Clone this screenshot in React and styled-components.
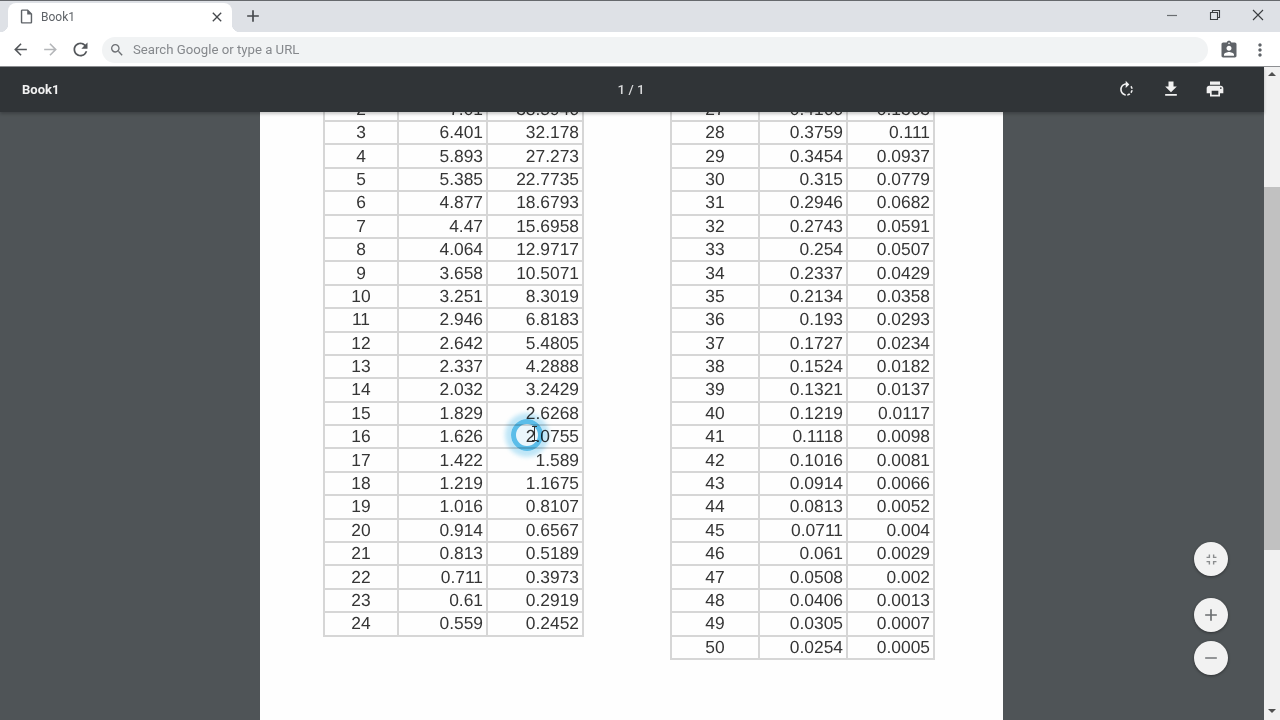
import React from "react";
import styled, { createGlobalStyle } from "styled-components";
import {
  MdArrowBack,
  MdArrowForward,
  MdRefresh,
  MdSearch,
  MdClose,
  MdAdd,
  MdRemove,
  MdFileDownload,
  MdPrint,
  MdMoreVert,
  MdAssignmentInd,
  MdRotateRight,
  MdFullscreenExit,
  MdOutlineInsertDriveFile,
} from "react-icons/md";

const leftRows = [
  ["2", "7.01", "38.5946"],
  ["3", "6.401", "32.178"],
  ["4", "5.893", "27.273"],
  ["5", "5.385", "22.7735"],
  ["6", "4.877", "18.6793"],
  ["7", "4.47", "15.6958"],
  ["8", "4.064", "12.9717"],
  ["9", "3.658", "10.5071"],
  ["10", "3.251", "8.3019"],
  ["11", "2.946", "6.8183"],
  ["12", "2.642", "5.4805"],
  ["13", "2.337", "4.2888"],
  ["14", "2.032", "3.2429"],
  ["15", "1.829", "2.6268"],
  ["16", "1.626", "2.0755"],
  ["17", "1.422", "1.589"],
  ["18", "1.219", "1.1675"],
  ["19", "1.016", "0.8107"],
  ["20", "0.914", "0.6567"],
  ["21", "0.813", "0.5189"],
  ["22", "0.711", "0.3973"],
  ["23", "0.61", "0.2919"],
  ["24", "0.559", "0.2452"],
];

const rightRows = [
  ["27", "0.4166", "0.1363"],
  ["28", "0.3759", "0.111"],
  ["29", "0.3454", "0.0937"],
  ["30", "0.315", "0.0779"],
  ["31", "0.2946", "0.0682"],
  ["32", "0.2743", "0.0591"],
  ["33", "0.254", "0.0507"],
  ["34", "0.2337", "0.0429"],
  ["35", "0.2134", "0.0358"],
  ["36", "0.193", "0.0293"],
  ["37", "0.1727", "0.0234"],
  ["38", "0.1524", "0.0182"],
  ["39", "0.1321", "0.0137"],
  ["40", "0.1219", "0.0117"],
  ["41", "0.1118", "0.0098"],
  ["42", "0.1016", "0.0081"],
  ["43", "0.0914", "0.0066"],
  ["44", "0.0813", "0.0052"],
  ["45", "0.0711", "0.004"],
  ["46", "0.061", "0.0029"],
  ["47", "0.0508", "0.002"],
  ["48", "0.0406", "0.0013"],
  ["49", "0.0305", "0.0007"],
  ["50", "0.0254", "0.0005"],
];

function GaugeTable({ rows, columns }) {
  return (
    <Table>
      {rows.map((row) => (
        <Row key={row[0]} $columns={columns}>
          <GaugeCell>{row[0]}</GaugeCell>
          <NumberCell>{row[1]}</NumberCell>
          <NumberCell>{row[2]}</NumberCell>
        </Row>
      ))}
    </Table>
  );
}

export default function App() {
  return (
    <>
      <GlobalStyle />
      <Window>
        <TabStrip>
          <Tab>
            <MdOutlineInsertDriveFile size={17} color="#5f6368" />
            <TabTitle>Book1</TabTitle>
            <MdClose size={16} color="#45484c" />
          </Tab>
          <NewTab>
            <MdAdd size={20} color="#45484c" />
          </NewTab>
          <WindowControls>
            <WindowButton>
              <svg width="12" height="12" viewBox="0 0 12 12">
                <path d="M1 6.5h10" stroke="#6a6d71" strokeWidth="1.2" />
              </svg>
            </WindowButton>
            <WindowButton>
              <svg width="12" height="12" viewBox="0 0 12 12" fill="none">
                <path d="M1.5 3.5h7v7h-7z M3.5 3.5v-2h7v7h-2" stroke="#3a3d40" strokeWidth="1.1" />
              </svg>
            </WindowButton>
            <WindowButton>
              <svg width="12" height="12" viewBox="0 0 12 12">
                <path d="M1 1l10 10M11 1L1 11" stroke="#3a3d40" strokeWidth="1.1" />
              </svg>
            </WindowButton>
          </WindowControls>
        </TabStrip>

        <Toolbar>
          <NavButton>
            <MdArrowBack size={19} color="#54575b" />
          </NavButton>
          <NavButton>
            <MdArrowForward size={19} color="#b4b6b9" />
          </NavButton>
          <NavButton>
            <MdRefresh size={21} color="#54575b" />
          </NavButton>
          <Omnibox>
            <MdSearch size={16} color="#6c6f73" />
            <OmniboxText>Search Google or type a URL</OmniboxText>
          </Omnibox>
          <ProfileButton>
            <MdAssignmentInd size={20} color="#5f6368" />
          </ProfileButton>
          <MenuButton>
            <MdMoreVert size={20} color="#5f6368" />
          </MenuButton>
        </Toolbar>

        <Main>
          <ViewerColumn>
            <PdfBar>
              <PdfTitle>Book1</PdfTitle>
              <PageCount>1 / 1</PageCount>
              <PdfActions>
                <MdRotateRight size={19} color="#f1f1f1" />
                <MdFileDownload size={20} color="#f1f1f1" />
                <MdPrint size={20} color="#f1f1f1" />
              </PdfActions>
            </PdfBar>
            <Canvas>
              <Page>
                <GaugeTable rows={leftRows} columns="74px 89px 96px" />
                <GaugeTable rows={rightRows} columns="88px 88px 87px" />
              </Page>
              <Ripple>
                <ICursor />
              </Ripple>
              <FabStack>
                <Fab>
                  <MdFullscreenExit size={17} color="#8a8c8e" />
                </Fab>
                <Fab $gap="22px">
                  <MdAdd size={20} color="#6b6e70" />
                </Fab>
                <Fab $gap="9px">
                  <MdRemove size={20} color="#808385" />
                </Fab>
              </FabStack>
            </Canvas>
          </ViewerColumn>
          <Scrollbar>
            <ArrowUp />
            <Thumb />
            <ArrowDown />
          </Scrollbar>
        </Main>
      </Window>
    </>
  );
}

const GlobalStyle = createGlobalStyle`
  html, body {
    margin: 0;
    padding: 0;
    width: 1280px;
    height: 720px;
    overflow: hidden;
  }
  * {
    box-sizing: border-box;
  }
`;

const Window = styled.div`
  width: 1280px;
  height: 720px;
  display: flex;
  flex-direction: column;
  font-family: Roboto, "Liberation Sans", sans-serif;
  filter: blur(0.4px);
`;

const TabStrip = styled.div`
  height: 32px;
  flex: none;
  display: flex;
  align-items: flex-end;
  padding: 0 1px 0 8px;
  background: #dee1e6;
  border-top: 1px solid #66696d;
`;

const Tab = styled.div`
  position: relative;
  width: 224px;
  height: 29px;
  display: flex;
  align-items: center;
  padding: 0 7px 2px 10px;
  background: #fff;
  border-radius: 8px 8px 0 0;

  &::before,
  &::after {
    content: "";
    position: absolute;
    bottom: 0;
    width: 8px;
    height: 8px;
  }
  &::before {
    left: -8px;
    background: radial-gradient(circle at 0 0, transparent 8px, #fff 8.5px);
  }
  &::after {
    right: -8px;
    background: radial-gradient(circle at 100% 0, transparent 8px, #fff 8.5px);
  }
`;

const TabTitle = styled.span`
  flex: 1;
  margin-left: 6px;
  font-size: 12px;
  color: #5f6368;
`;

const NewTab = styled.div`
  display: flex;
  align-items: center;
  margin: 0 0 6px 11px;
  height: 20px;
`;

const WindowControls = styled.div`
  margin-left: auto;
  align-self: flex-start;
  display: flex;
`;

const WindowButton = styled.div`
  width: 43px;
  height: 27px;
  display: flex;
  align-items: center;
  justify-content: center;
`;

const Toolbar = styled.div`
  height: 35px;
  flex: none;
  display: flex;
  align-items: center;
  padding: 1px 0 0 5px;
  background: #fff;
  border-bottom: 1px solid #8d8f92;
`;

const NavButton = styled.div`
  width: 30px;
  height: 30px;
  display: flex;
  align-items: center;
  justify-content: center;
`;

const Omnibox = styled.div`
  width: 1106px;
  height: 26px;
  margin-left: 7px;
  padding-left: 7px;
  display: flex;
  align-items: center;
  background: #f1f3f4;
  border-radius: 13px;
`;

const OmniboxText = styled.span`
  margin-left: 8px;
  font-size: 13.2px;
  color: #85888c;
`;

const ProfileButton = styled.div`
  width: 20px;
  margin-left: 11px;
  display: flex;
`;

const MenuButton = styled.div`
  width: 20px;
  margin-left: 11px;
  display: flex;
`;

const Main = styled.div`
  flex: 1;
  min-height: 0;
  display: flex;
`;

const ViewerColumn = styled.div`
  flex: 1;
  min-width: 0;
  display: flex;
  flex-direction: column;
`;

const PdfBar = styled.div`
  position: relative;
  z-index: 2;
  height: 45px;
  flex: none;
  display: flex;
  align-items: center;
  padding-left: 22px;
  background: #303437;
  box-shadow: 0 2px 3px rgba(0, 0, 0, 0.22);
`;

const PdfTitle = styled.span`
  width: 595.5px;
  font-size: 13px;
  font-weight: 700;
  color: #f1f1f1;
`;

const PageCount = styled.span`
  width: 499.5px;
  font-size: 13.4px;
  font-weight: 500;
  color: #d8d9da;
`;

const PdfActions = styled.div`
  display: flex;
  align-items: center;
  gap: 24.5px;
  padding-bottom: 1px;
`;

const Canvas = styled.div`
  position: relative;
  flex: 1;
  min-height: 0;
  overflow: hidden;
  background: #4f5457;
`;

const Page = styled.div`
  width: 743px;
  height: 700px;
  margin: -15.4px auto 0 260px;
  padding-left: 63px;
  display: flex;
  gap: 86px;
  align-items: flex-start;
  background: #fefefe;
`;

const Table = styled.div`
  display: flex;
  flex-direction: column;
  border-top: 2px solid #d6d6d6;
  border-left: 2px solid #d6d6d6;
  color: #353535;
  font-family: "Liberation Sans", Arial, sans-serif;
  font-size: 17.4px;
  text-rendering: geometricPrecision;
`;

const Row = styled.div`
  height: 23.4px;
  display: grid;
  grid-template-columns: ${(props) => props.$columns};
  border-bottom: 2px solid #d6d6d6;
`;

const GaugeCell = styled.div`
  display: flex;
  align-items: center;
  justify-content: center;
  border-right: 2px solid #d6d6d6;
`;

const NumberCell = styled.div`
  display: flex;
  align-items: center;
  justify-content: flex-end;
  padding-right: 3px;
  border-right: 2px solid #d6d6d6;
`;

const Ripple = styled.div`
  position: absolute;
  left: 511px;
  top: 307px;
  width: 32px;
  height: 32px;
  border-radius: 50%;
  border: 5px solid #5bbeea;
  background: rgba(120, 200, 240, 0.14);
  box-shadow: 0 0 4px 6px rgba(150, 215, 243, 0.6);
  mix-blend-mode: multiply;
`;

const ICursor = styled.div`
  position: absolute;
  left: 16px;
  top: 2px;
  width: 5px;
  height: 15px;
  border-top: 1px solid #333;
  border-bottom: 1px solid #333;
  background: linear-gradient(#333, #333) center / 1px 100% no-repeat;
`;

const FabStack = styled.div`
  position: absolute;
  right: 36px;
  top: 430px;
  display: flex;
  flex-direction: column;
`;

const Fab = styled.div`
  width: 34px;
  height: 34px;
  margin-top: ${(props) => props.$gap || "0"};
  display: flex;
  align-items: center;
  justify-content: center;
  border-radius: 50%;
  background: #f2f2f2;
  box-shadow: 0 1px 3px rgba(0, 0, 0, 0.4);
`;

const Scrollbar = styled.div`
  width: 16px;
  flex: none;
  display: flex;
  flex-direction: column;
  align-items: center;
  padding-top: 5px;
  background: #f1f1f1;
`;

const ArrowUp = styled.div`
  width: 0;
  height: 0;
  border-left: 4px solid transparent;
  border-right: 4px solid transparent;
  border-bottom: 4px solid #505050;
`;

const Thumb = styled.div`
  width: 16px;
  height: 363px;
  margin-top: 111px;
  background: #c1c1c1;
`;

const ArrowDown = styled.div`
  width: 0;
  height: 0;
  margin-top: 159px;
  border-left: 4px solid transparent;
  border-right: 4px solid transparent;
  border-top: 4px solid #505050;
`;
